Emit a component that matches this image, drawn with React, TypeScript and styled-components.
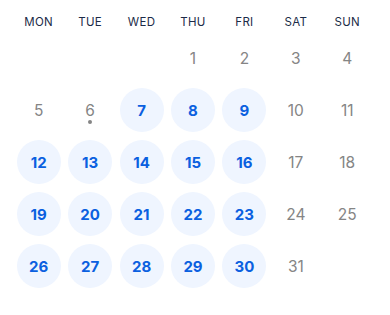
import React from "react";
import styled, { createGlobalStyle } from "styled-components";

const GlobalStyle = createGlobalStyle`
  html, body {
    margin: 0;
    padding: 0;
    background: #ffffff;
  }
  body {
    font-family: "Inter", "Liberation Sans", sans-serif;
  }
`;

const Calendar = styled.div`
  width: 360px;
  padding: 12px 0 0 13px;
`;

const WeekHeader = styled.div`
  display: grid;
  grid-template-columns: repeat(7, 1fr);
  height: 20px;
  margin-bottom: 4px;
`;

const DayName = styled.div`
  display: flex;
  align-items: center;
  justify-content: center;
  font-size: 11.5px;
  font-weight: 400;
  color: #1c2b48;
  letter-spacing: 0.3px;
`;

const Grid = styled.div`
  display: grid;
  grid-template-columns: repeat(7, 1fr);
  grid-auto-rows: 44px;
  row-gap: 8px;
`;

const Cell = styled.div`
  display: flex;
  justify-content: center;
  align-items: center;
`;

const Day = styled.div<{ $available?: boolean }>`
  position: relative;
  width: 44px;
  height: 44px;
  border-radius: 50%;
  display: flex;
  align-items: center;
  justify-content: center;
  font-size: ${(p) => (p.$available ? "15px" : "15.5px")};
  font-weight: ${(p) => (p.$available ? 700 : 400)};
  color: ${(p) => (p.$available ? "#0a60e0" : "#858585")};
  background: ${(p) => (p.$available ? "#eff5ff" : "transparent")};
`;

const TodayDot = styled.span`
  position: absolute;
  left: 50%;
  bottom: 8px;
  width: 4px;
  height: 4px;
  margin-left: -2px;
  border-radius: 50%;
  background: #858585;
`;

const weekdays = ["MON", "TUE", "WED", "THU", "FRI", "SAT", "SUN"];
const leadingBlanks = 3;
const daysInMonth = 31;
const today = 6;

const isAvailable = (day: number, col: number) =>
  day >= 7 && day <= 30 && col < 5;

export default function App() {
  const cells: React.ReactNode[] = [];
  for (let i = 0; i < leadingBlanks; i++) {
    cells.push(<Cell key={`blank-${i}`} />);
  }
  for (let d = 1; d <= daysInMonth; d++) {
    const col = (d - 1 + leadingBlanks) % 7;
    cells.push(
      <Cell key={d}>
        <Day $available={isAvailable(d, col)}>
          {d}
          {d === today && <TodayDot />}
        </Day>
      </Cell>
    );
  }

  return (
    <>
      <GlobalStyle />
      <Calendar>
        <WeekHeader>
          {weekdays.map((w) => (
            <DayName key={w}>{w}</DayName>
          ))}
        </WeekHeader>
        <Grid>{cells}</Grid>
      </Calendar>
    </>
  );
}
